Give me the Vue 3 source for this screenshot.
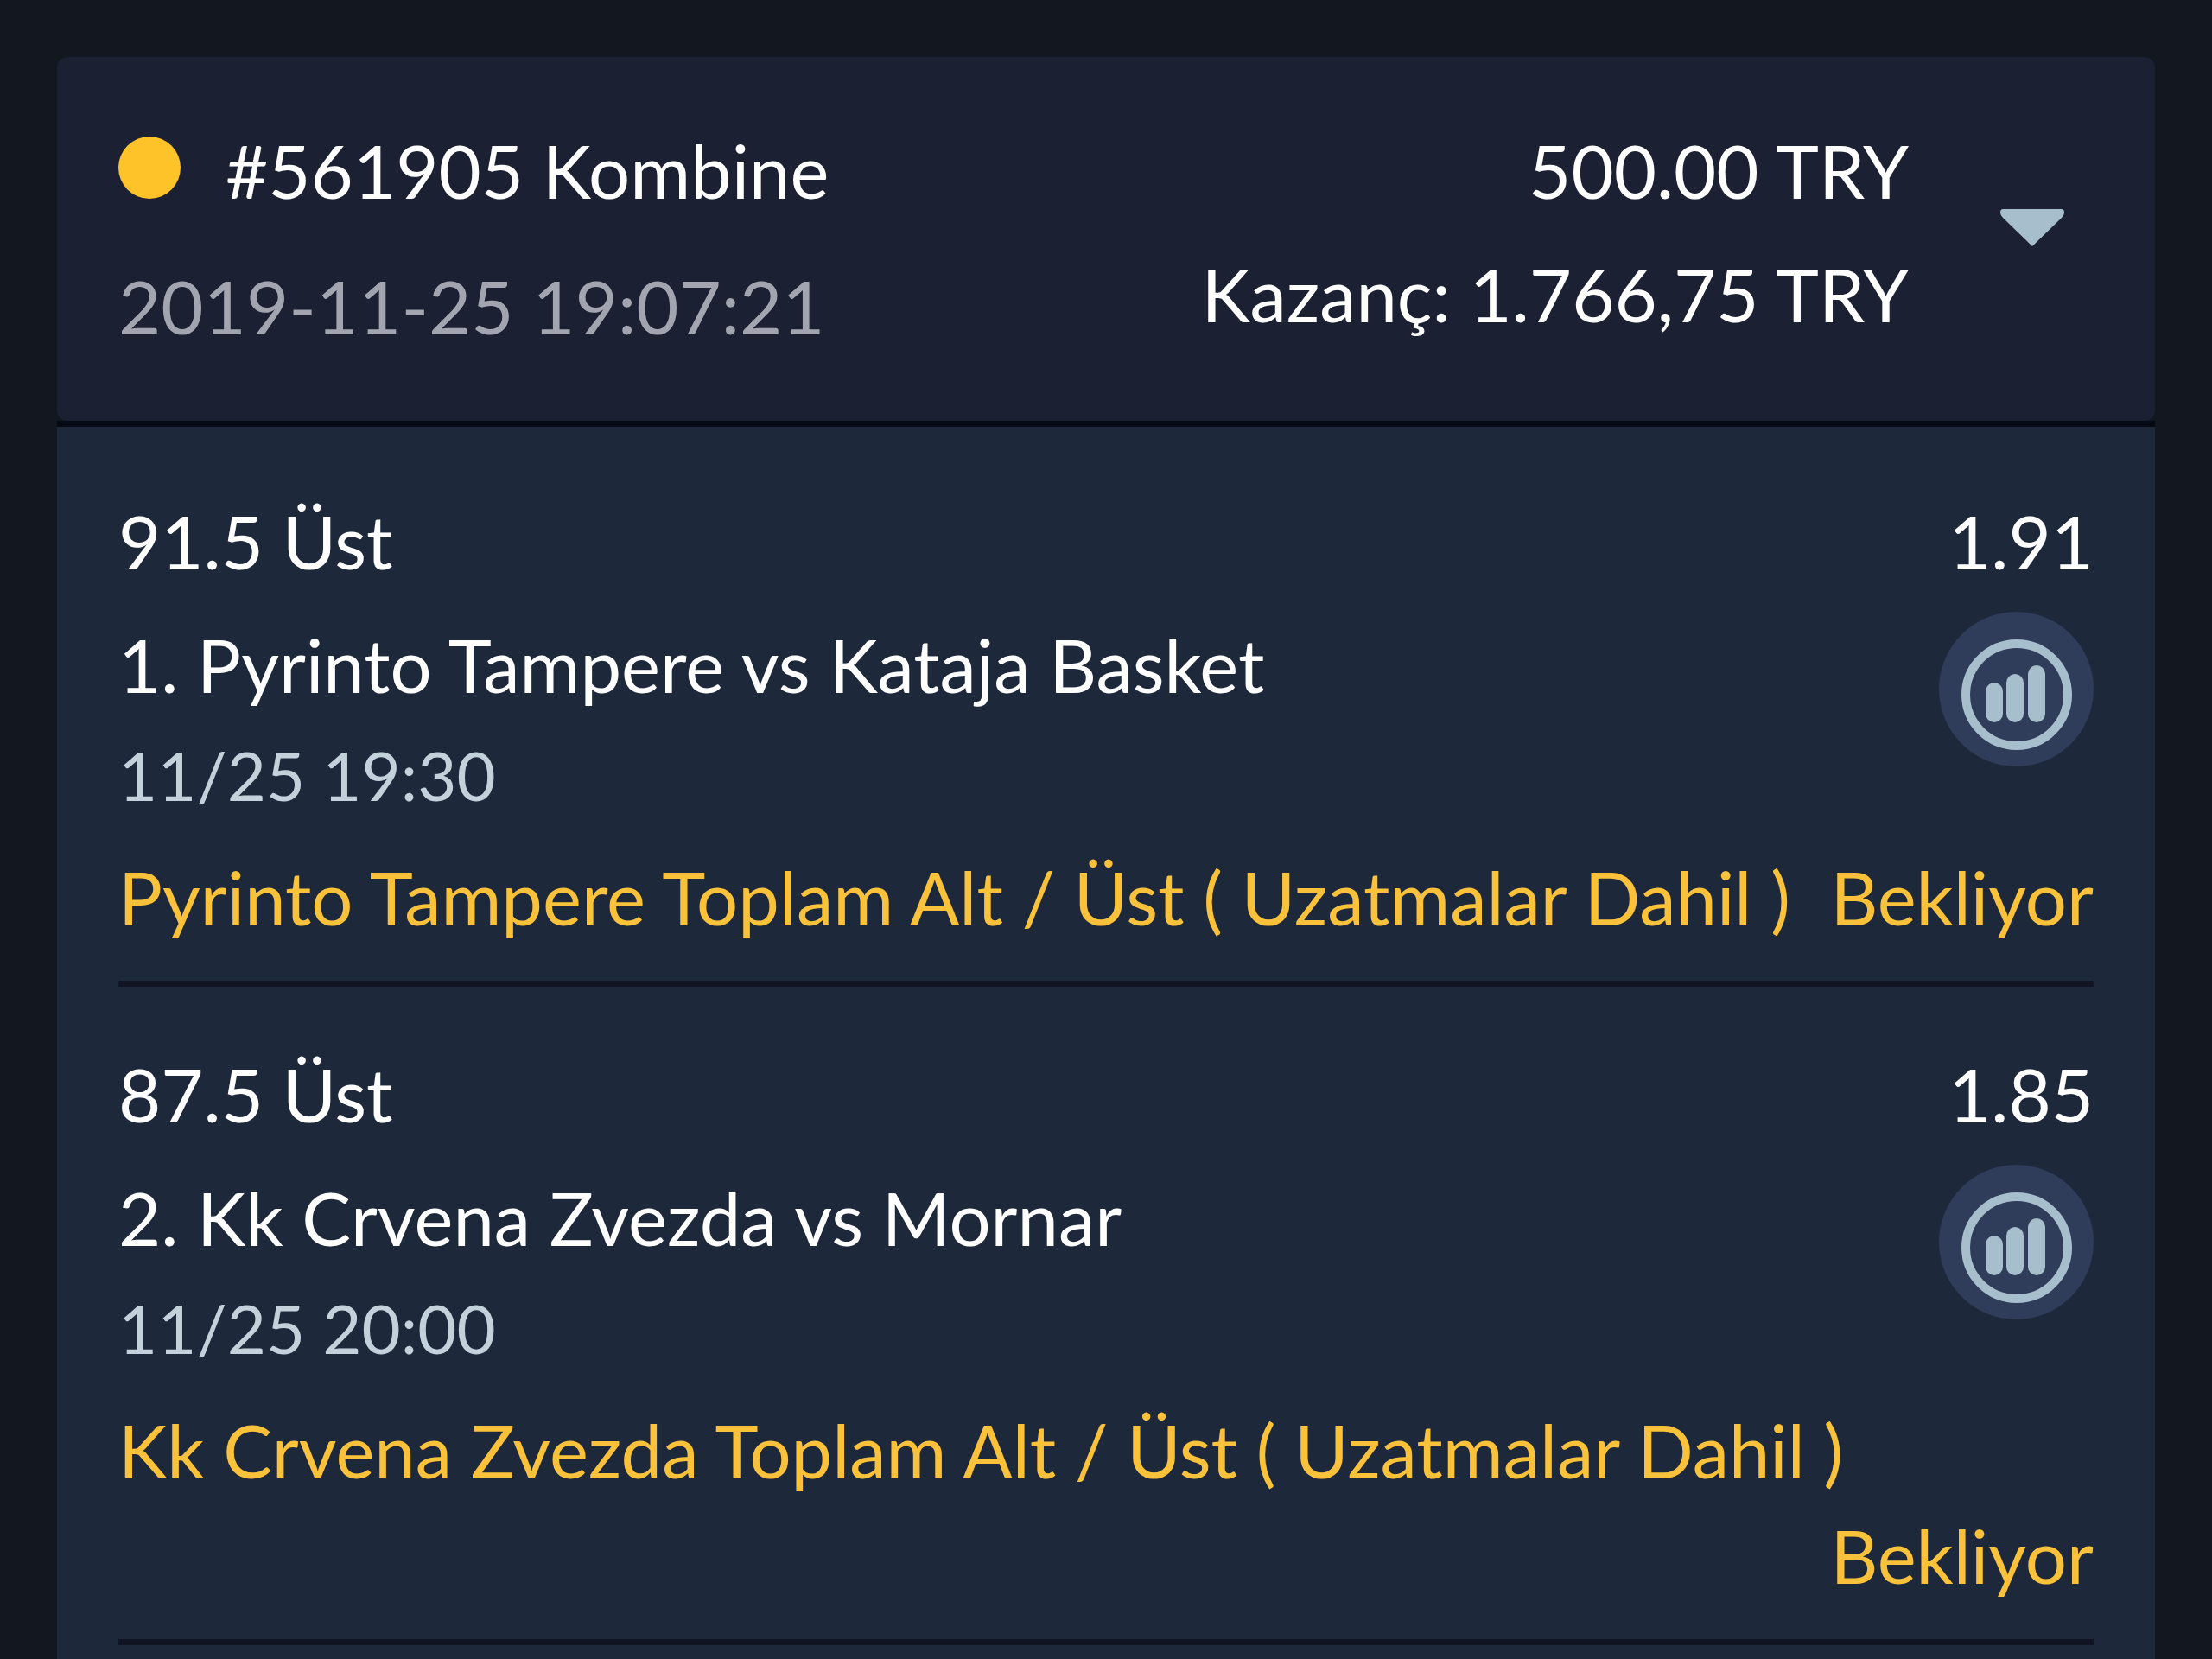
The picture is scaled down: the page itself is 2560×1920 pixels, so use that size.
<template>
  <main class="page">
    <article class="coupon">
      <header class="coupon-head">
        <div class="coupon-info">
          <h1 class="coupon-title">
            <span class="status-dot"></span>
            <span>#{{ coupon.id }} {{ coupon.type }}</span>
          </h1>
          <time class="coupon-date">{{ coupon.date }}</time>
        </div>
        <div class="coupon-amounts">
          <span>{{ coupon.stake }}</span>
          <span>Kazanç: {{ coupon.win }}</span>
        </div>
        <button class="toggle" type="button" aria-label="Detaylar" :aria-expanded="open" @click="open = !open">
          <svg viewBox="0 0 74 43" width="74" height="43">
            <path d="M3 0H71Q74 0 74 4Q74 7 71 10L37 43L3 10Q0 7 0 4Q0 0 3 0Z" fill="#a7bfcc" />
          </svg>
        </button>
      </header>

      <ul v-if="open" class="bets">
        <li v-for="(bet, i) in bets" :key="bet.match" class="bet">
          <div class="bet-top">
            <div class="bet-info">
              <span>{{ bet.pick }}</span>
              <span class="bet-match">{{ i + 1 }}. {{ bet.match }}</span>
              <time class="bet-time">{{ bet.time }}</time>
            </div>
            <div class="bet-side">
              <span>{{ bet.odds }}</span>
              <button class="stats" type="button" aria-label="İstatistik">
                <svg viewBox="0 0 179 179" width="179" height="179">
                  <circle cx="90" cy="96" r="59" fill="none" stroke="#a7bfcc" stroke-width="10" />
                  <g fill="#a7bfcc">
                    <rect x="54" y="82" width="20" height="46" rx="10" />
                    <rect x="78" y="72" width="20" height="56" rx="10" />
                    <rect x="103" y="62" width="20" height="66" rx="10" />
                  </g>
                </svg>
              </button>
            </div>
          </div>
          <div class="bet-market">
            <span>{{ bet.market }}</span>
            <span class="bet-status">{{ bet.status }}</span>
          </div>
        </li>
      </ul>
    </article>
  </main>
</template>

<script setup>
import { ref } from 'vue'

const open = ref(true)

const coupon = {
  id: '561905',
  type: 'Kombine',
  date: '2019-11-25 19:07:21',
  stake: '500.00 TRY',
  win: '1.766,75 TRY'
}

const bets = [
  {
    pick: '91.5 Üst',
    match: 'Pyrinto Tampere vs Kataja Basket',
    time: '11/25 19:30',
    market: 'Pyrinto Tampere Toplam Alt / Üst ( Uzatmalar Dahil )',
    odds: '1.91',
    status: 'Bekliyor'
  },
  {
    pick: '87.5 Üst',
    match: 'Kk Crvena Zvezda vs Mornar',
    time: '11/25 20:00',
    market: 'Kk Crvena Zvezda Toplam Alt / Üst ( Uzatmalar Dahil )',
    odds: '1.85',
    status: 'Bekliyor'
  }
]
</script>

<style>
body {
  margin: 0;
  background: #131720;
}
</style>

<style scoped>
.page {
  display: flex;
  box-sizing: border-box;
  min-height: 100vh;
  padding: 66px 66px 0;
  font-family: Lato, "Liberation Sans", sans-serif;
  font-size: 85px;
  line-height: 122px;
  color: #fff;
}

.coupon {
  flex: 1;
  display: flex;
  flex-direction: column;
  min-width: 0;
}

.coupon-head {
  display: flex;
  padding: 70px 105px 72px 71px;
  background: #1b2032;
  border-radius: 12px;
}

.coupon-info {
  flex: 1;
  display: flex;
  flex-direction: column;
  gap: 35px;
}

.coupon-title {
  display: flex;
  align-items: baseline;
  gap: 52px;
  margin: 0;
  font-size: inherit;
  font-weight: 400;
}

.status-dot {
  width: 72px;
  height: 72px;
  border-radius: 50%;
  background: #ffc32a;
}

.coupon-date { color: #a2a5af; }

.coupon-amounts {
  display: flex;
  flex-direction: column;
  gap: 21px;
  text-align: right;
}

.toggle {
  align-self: center;
  margin-left: 106px;
  padding: 0 0 24px;
  border: none;
  background: none;
  cursor: pointer;
}

.toggle svg,
.stats svg { display: block; }

.bets {
  flex: 1;
  margin: 0;
  padding: 8px 71px 0;
  list-style: none;
  background: #1e283b;
  border-top: 7px solid #060a14;
}

.bet {
  padding: 63px 0 36px;
  border-bottom: 7px solid #111423;
}

.bet-top {
  display: flex;
  justify-content: space-between;
  margin-bottom: 24px;
}

.bet-info {
  display: flex;
  flex-direction: column;
}

.bet-match { margin-top: 21px; }

.bet-time {
  margin-top: 11px;
  font-size: 78px;
  line-height: 112px;
  color: #c3d1db;
}

.bet-side {
  display: flex;
  flex-direction: column;
  align-items: flex-end;
  gap: 21px;
}

.stats {
  padding: 0;
  border: none;
  border-radius: 50%;
  background: #2f3c5a;
  cursor: pointer;
}

.bet-market {
  display: flex;
  flex-wrap: wrap;
  column-gap: 20px;
  color: #fac23a;
}

.bet-status { margin-left: auto; }
</style>
